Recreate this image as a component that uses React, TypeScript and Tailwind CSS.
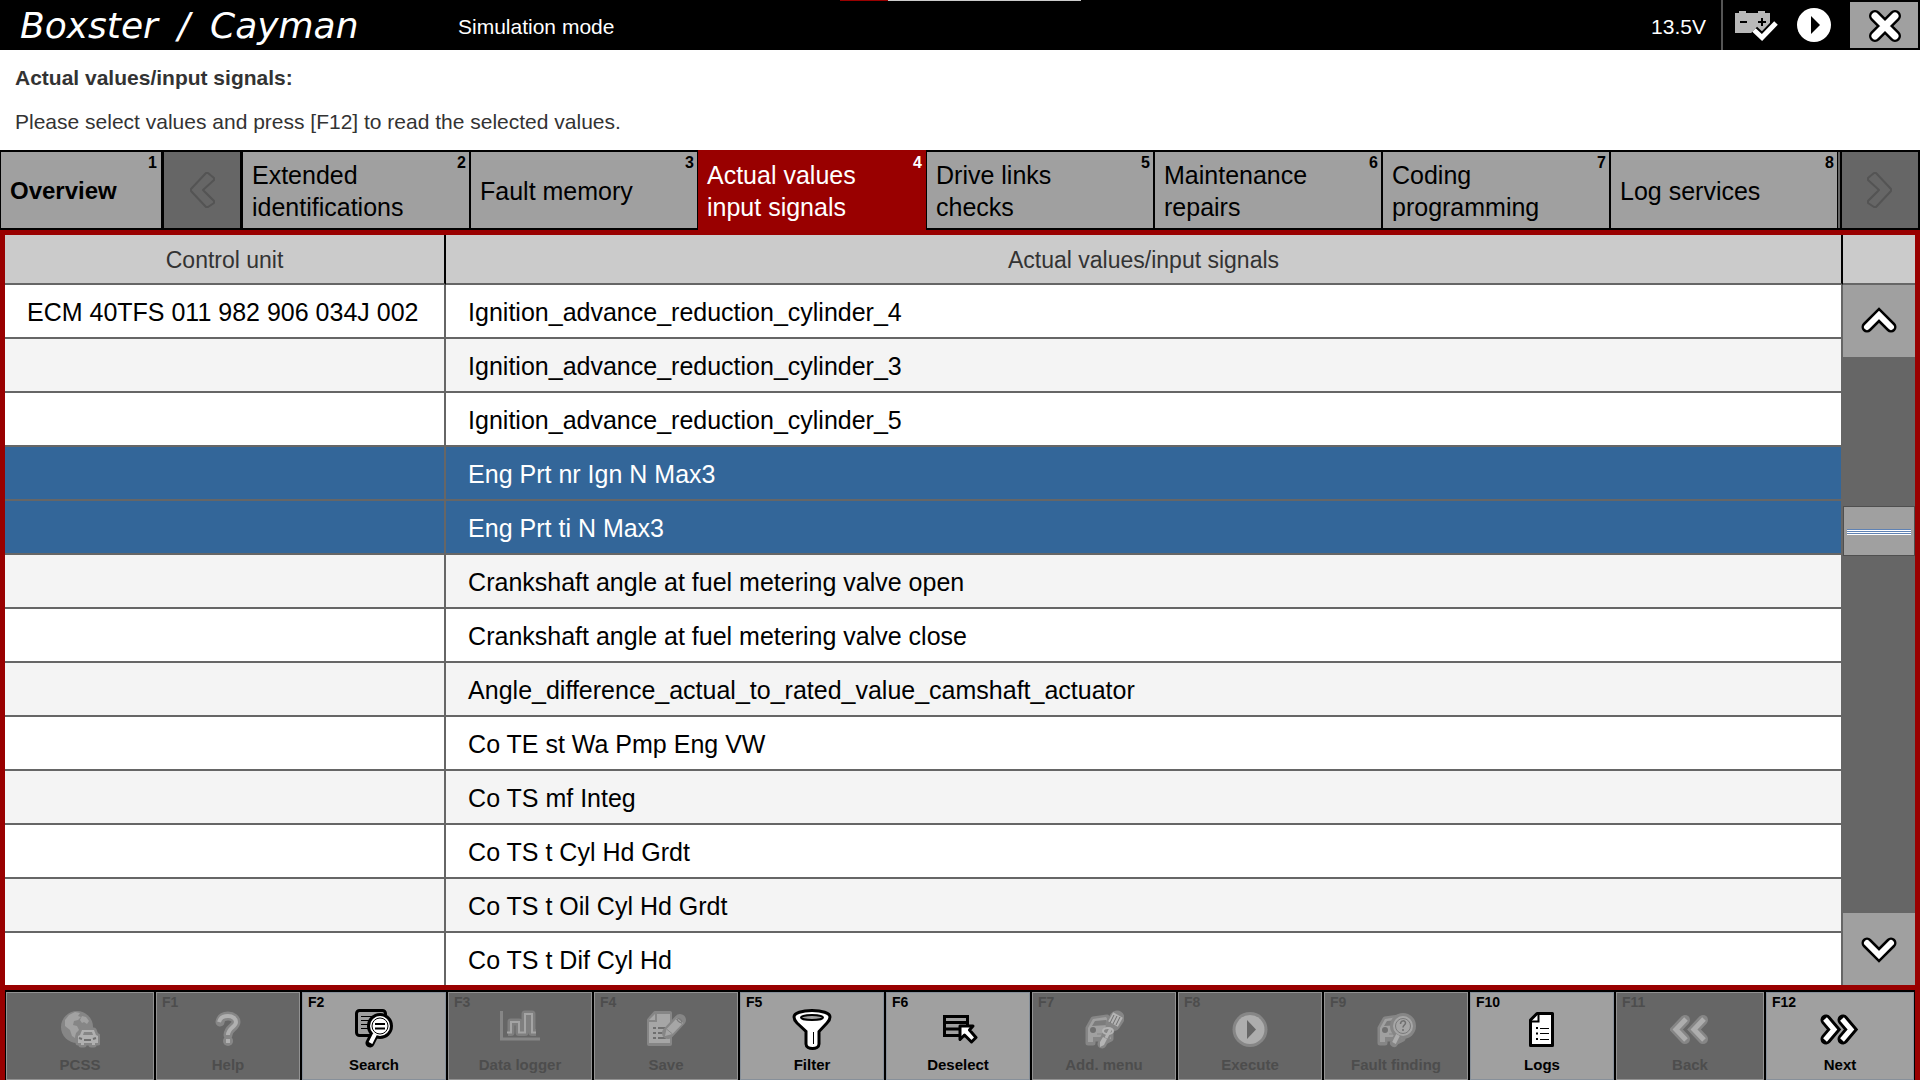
import { useState } from "react";

const tabs = [
  { id: 2, lines: ["Extended", "identifications"] },
  { id: 3, lines: ["Fault memory"] },
  { id: 4, lines: ["Actual values", "input signals"] },
  { id: 5, lines: ["Drive links", "checks"] },
  { id: 6, lines: ["Maintenance", "repairs"] },
  { id: 7, lines: ["Coding", "programming"] },
  { id: 8, lines: ["Log services"] },
];

const rows = [
  { unit: "ECM 40TFS 011 982 906 034J 002", value: "Ignition_advance_reduction_cylinder_4" },
  { unit: "", value: "Ignition_advance_reduction_cylinder_3" },
  { unit: "", value: "Ignition_advance_reduction_cylinder_5" },
  { unit: "", value: "Eng Prt nr Ign N Max3" },
  { unit: "", value: "Eng Prt ti N Max3" },
  { unit: "", value: "Crankshaft angle at fuel metering valve open" },
  { unit: "", value: "Crankshaft angle at fuel metering valve close" },
  { unit: "", value: "Angle_difference_actual_to_rated_value_camshaft_actuator" },
  { unit: "", value: "Co TE st Wa Pmp Eng VW" },
  { unit: "", value: "Co TS mf Integ" },
  { unit: "", value: "Co TS t Cyl Hd Grdt" },
  { unit: "", value: "Co TS t Oil Cyl Hd Grdt" },
  { unit: "", value: "Co TS t Dif Cyl Hd" },
];

const actions = [
  { fkey: "", label: "PCSS", icon: <GlobeCarIcon /> },
  { fkey: "F1", label: "Help", icon: <HelpIcon /> },
  { fkey: "F2", label: "Search", icon: <SearchIcon />, enabled: true },
  { fkey: "F3", label: "Data logger", icon: <LoggerIcon /> },
  { fkey: "F4", label: "Save", icon: <SaveIcon /> },
  { fkey: "F5", label: "Filter", icon: <FilterIcon />, enabled: true },
  { fkey: "F6", label: "Deselect", icon: <DeselectIcon />, enabled: true },
  { fkey: "F7", label: "Add. menu", icon: <CarToolIcon /> },
  { fkey: "F8", label: "Execute", icon: <ExecuteIcon /> },
  { fkey: "F9", label: "Fault finding", icon: <CarSearchIcon /> },
  { fkey: "F10", label: "Logs", icon: <LogsIcon />, enabled: true },
  { fkey: "F11", label: "Back", icon: <BackIcon /> },
  { fkey: "F12", label: "Next", icon: <NextIcon />, enabled: true },
];

function GlobeCarIcon() {
  return (
    <svg width="40" height="40" viewBox="0 0 40 40" fill="none">
      <circle cx="17" cy="19" r="16" fill="#868686" />
      <path
        d="M5 12l4-5 6-3 5 1-2 3 3 1-3 3-4 1-1 4 4 1 2 4-3 3-1 5-3-2-2-6-5-4zM22 8l4 1 3 4-2 3-3-2-2 1-2-3z"
        fill="#a2a2a2"
      />
      <path
        d="M20 27l2-5h12l2 5 2 1v7h-4v2h-3v-2h-7v2h-3v-2h-3v-7z"
        fill="#868686"
        stroke="#868686"
        strokeWidth="5"
        strokeLinejoin="round"
      />
      <path d="M20 27l2-5h12l2 5 2 1v7h-3v2h-3v-2h-8v2h-3v-2h-3v-7z" fill="#b0b0b0" />
      <path d="M23 27l1-3h8l1 3z" fill="#868686" />
      <path d="M19 30l3 1M36 30l-3 1M24 32h7" stroke="#6f6f6f" strokeWidth="2" />
    </svg>
  );
}

function HelpIcon() {
  return (
    <svg width="40" height="40" viewBox="0 0 40 40" fill="none" strokeLinecap="round">
      <path d="M12 14c1-5 4-6 8-6 5 0 8 3 8 6 0 5-8 6-8 13" stroke="#868686" strokeWidth="9" />
      <path d="M20 33h.1" stroke="#868686" strokeWidth="10" />
      <path
        d="M11 14c1-4 4-6 9-6s8 3 8 6c0 5-8 6-8 13"
        stroke="#b0b0b0"
        strokeWidth="4"
        strokeLinecap="butt"
      />
      <path d="M18 31h4v4h-4z" fill="#b0b0b0" />
    </svg>
  );
}

function SearchIcon() {
  return (
    <svg width="40" height="40" viewBox="0 0 40 40" fill="none" stroke="#000">
      <rect x="2.500" y="2.500" width="29" height="25" rx="3" strokeWidth="3" />
      <path d="M7 8.500h18M7 12.500h9M7 16.500h7M7 20.500h8" />
      <path d="M20 27l-4 8" strokeWidth="9" strokeLinecap="round" />
      <circle cx="26" cy="18" r="13" fill="#000" stroke="none" />
      <circle cx="26" cy="18" r="10" fill="#fff" stroke="none" />
      <circle cx="26" cy="18" r="8" />
      <path d="M21 16h10M21 20.500h10" strokeWidth="2" />
      <path d="M21 26l-4.500 9" stroke="#fff" strokeWidth="4" />
    </svg>
  );
}

function LoggerIcon() {
  return (
    <svg width="40" height="40" viewBox="0 0 40 40" fill="none">
      <path d="M1.500 3v28H40" stroke="#868686" strokeWidth="3" />
      <path
        d="M8 24.500h3V14h8v10.500h6V6h7v18.500h4"
        stroke="#7f7f7f"
        strokeWidth="7"
        strokeLinejoin="round"
      />
      <path d="M7 24.500h4V14h8v10.500h6V6h7v18.500h4" stroke="#a4a4a4" strokeWidth="2" />
    </svg>
  );
}

function SaveIcon() {
  return (
    <svg width="40" height="40" viewBox="0 0 40 40" fill="none">
      <path
        d="M9 5h15v31H3V12z"
        fill="#868686"
        stroke="#868686"
        strokeWidth="4"
        strokeLinejoin="round"
      />
      <path d="M11 6h13v29H3V14h8z" fill="#a6a6a6" />
      <path d="M9 6v6H3z" fill="#a6a6a6" />
      <path d="M7 20h3M7 25h3M7 30h3M12 20h8M12 25h6M12 30h8" stroke="#6f6f6f" strokeWidth="2" />
      <path d="M22 25L34 12" stroke="#868686" strokeWidth="12" strokeLinecap="round" />
      <path d="M19 28l1.500-7L31 10l6 5-10.500 11z" fill="#a6a6a6" />
      <path d="M20.500 21l6 5M30 11l6 5" stroke="#868686" />
      <ellipse cx="33.500" cy="12.500" rx="2.500" ry="1.500" transform="rotate(40 33.500 12.500)" stroke="#7a7a7a" />
    </svg>
  );
}

function FilterIcon() {
  return (
    <svg width="40" height="42" viewBox="0 0 40 42" fill="none">
      <path
        d="M2 9c0-4 8-6.500 18-6.500S38 5 38 9c0 2-1 4-3 6l-8 8.500V36c0 6-13 6-13 0V23.500L5 15c-2-2-3-4-3-6z"
        fill="#fff"
        stroke="#000"
        strokeWidth="3"
      />
      <ellipse cx="20" cy="9.500" rx="11" ry="2.500" fill="#a0a0a0" stroke="#000" strokeWidth="2" />
      <path d="M21.500 24v12" stroke="#000" />
    </svg>
  );
}

function DeselectIcon() {
  return (
    <svg width="40" height="40" viewBox="0 0 40 40" fill="none" stroke="#000">
      <path d="M6.500 8.500h23v19h-23zM6.500 14.500h23M6.500 21h23" strokeWidth="3" />
      <path
        d="M22 18h13l-3.500 4 6.500 7.500-4.500 4.500-7-7-4.500 4.500z"
        fill="#fff"
        strokeWidth="3"
        strokeLinejoin="round"
      />
    </svg>
  );
}

function CarShape() {
  return (
    <>
      <path
        d="M4 20l5-9 14-2 4 8v14l-6 3-1-3H9v4H4z"
        fill="#868686"
        stroke="#868686"
        strokeWidth="5"
        strokeLinejoin="round"
      />
      <path d="M4 20l5-9 13-2 5 8v14h-4l-1-2H9v5H4z" fill="#a0a0a0" />
      <path d="M8 18l3-5 11-1 2 5z" fill="#7c7c7c" />
      <circle cx="9" cy="22" r="3" fill="#707070" />
      <path d="M13 26h10" stroke="#868686" />
    </>
  );
}

function CarToolIcon() {
  return (
    <svg width="40" height="42" viewBox="0 0 40 42" fill="none">
      <CarShape />
      <path d="M33 10l-4 6" stroke="#868686" strokeWidth="15" strokeLinecap="round" />
      <path d="M26 20l-8 16" stroke="#868686" strokeWidth="9" strokeLinecap="round" />
      <path d="M34 7l-5 9" stroke="#b4b4b4" strokeWidth="11" strokeLinejoin="round" />
      <path d="M30 7l-4 8M33 8l-4 8M36 9l-4 8" stroke="#6f6f6f" />
      <path d="M27 20l-5 10" stroke="#b4b4b4" strokeWidth="3" />
      <ellipse cx="24" cy="23" rx="5" ry="3" stroke="#b4b4b4" strokeWidth="2" />
      <path d="M19 29l4 2-3 6-4 2v-5z" fill="#b4b4b4" />
    </svg>
  );
}

function ExecuteIcon() {
  return (
    <svg width="40" height="40" viewBox="0 0 40 40" fill="none">
      <circle cx="20" cy="21.500" r="17.500" fill="#868686" />
      <circle cx="20" cy="21.500" r="14.500" fill="#adadad" />
      <path d="M17 12l9 9.500-9 9.500z" fill="#666" />
    </svg>
  );
}

function CarSearchIcon() {
  return (
    <svg width="40" height="40" viewBox="0 0 40 40" fill="none">
      <CarShape />
      <path d="M23 26l-5 9" stroke="#868686" strokeWidth="8" strokeLinecap="round" />
      <circle cx="27" cy="18" r="13" fill="#868686" />
      <circle cx="27" cy="18" r="10" fill="#a6a6a6" />
      <circle cx="27" cy="18" r="7.500" stroke="#7a7a7a" />
      <path d="M24.500 16c0-4 5-4 5-1 0 2-2.500 2-2.500 4.500M27 21v2" stroke="#6f6f6f" strokeWidth="1.500" />
      <path d="M22 27l-4 8" stroke="#adadad" strokeWidth="4" />
    </svg>
  );
}

function LogsIcon() {
  return (
    <svg width="40" height="40" viewBox="0 0 40 40" fill="none" stroke="#000">
      <path d="M15 5.500h15.500v32H8.500V12z" fill="#fff" strokeWidth="3" strokeLinejoin="round" />
      <path d="M16.500 5v8.500H8" strokeWidth="2" />
      <path d="M14 20h2M14 25.500h2M14 31h2" strokeWidth="2" />
      <path d="M18 20.500h9M18 25.500h9M18 31.500h9" />
    </svg>
  );
}

function BackIcon() {
  return (
    <svg width="40" height="40" viewBox="0 0 40 40" fill="none">
      <path d="M15 12L6 21.500 15 31M33 12l-9 9.500L33 31" stroke="#868686" strokeWidth="10" strokeLinecap="round" />
      <path d="M16 11L6 21.500 16 32M34 11L24 21.500 34 32" stroke="#adadad" strokeWidth="5" />
    </svg>
  );
}

function NextIcon() {
  return (
    <svg width="40" height="40" viewBox="0 0 40 40" fill="none">
      <path d="M6 12l8 9.500L6 31M23 12l8 9.500L23 31" stroke="#000" strokeWidth="11" strokeLinecap="round" />
      <path d="M5 11l9 10.500L5 32M22 11l9 10.500L22 32" stroke="#fff" strokeWidth="5" />
    </svg>
  );
}

function BatteryIcon() {
  return (
    <svg width="46" height="32" viewBox="0 0 46 32" fill="none">
      <path d="M1 4h4V2h7v2h12V2h7v2h5v20H1z" fill="#b8b8b8" />
      <path d="M6 13h7M24 13h8M28 9v8" stroke="#000" strokeWidth="2" />
      <path d="M20 21l8 7.500L41 15" stroke="#000" strokeWidth="9" />
      <path d="M20 21l8 7.500L42 14" stroke="#fff" strokeWidth="5" />
    </svg>
  );
}

function ScrollChevron({ down }: { down?: boolean }) {
  const d = down ? "M7 8l12 12L31 8" : "M7 20L19 8l12 12";
  return (
    <svg width="38" height="28" viewBox="0 0 38 28" fill="none" strokeLinecap="round">
      <path d={d} stroke="#000" strokeWidth="11" />
      <path d={d} stroke="#fff" strokeWidth="6" />
    </svg>
  );
}

function TabChevron({ left }: { left?: boolean }) {
  return (
    <svg width="28" height="40" viewBox="0 0 28 40" fill="none" stroke="#545454" strokeWidth="2" strokeLinejoin="round">
      {left ? (
        <path d="M20 3l6 5v2L15 20l11 11v2l-6 4h-2L3 21v-2L18 3z" />
      ) : (
        <path d="M8 3L2 8v2l11 10L2 31v2l6 4h2l15-16v-2L10 3z" />
      )}
    </svg>
  );
}

export default function App() {
  const [activeTab, setActiveTab] = useState(4);
  const [selected, setSelected] = useState([3, 4]);

  const toggleRow = (index: number) => {
    setSelected((prev) =>
      prev.includes(index) ? prev.filter((i) => i !== index) : [...prev, index]
    );
  };

  return (
    <div className="flex min-h-screen flex-col bg-white font-['Liberation_Sans',Arial,sans-serif]">
      <header className="relative flex h-[50px] items-center bg-black text-[21px] text-white">
        <div className="absolute left-[840px] top-0 flex h-px w-[241px]">
          <span className="w-12 bg-[#990000]" />
          <span className="flex-1 bg-[#cccccc]" />
        </div>
        <div className="flex w-[458px] items-center gap-5 whitespace-nowrap pl-5 pt-[2px] font-['DejaVu_Sans',sans-serif] text-[36px] italic leading-10">
          <span>Boxster</span>
          <span>/</span>
          <span>Cayman</span>
        </div>
        <span className="pt-1">Simulation mode</span>
        <span className="ml-auto pr-[15px] pt-1">13.5V</span>
        <div className="flex h-full items-center border-l-2 border-[#555555] pl-[11px]">
          <BatteryIcon />
          <button className="ml-4" aria-label="Run">
            <svg width="36" height="36" viewBox="0 0 36 36">
              <circle cx="18" cy="18" r="17" fill="#fff" />
              <path d="M15 9l9 9-9 9z" fill="#000" />
            </svg>
          </button>
          <button
            className="ml-[18px] mr-[2px] flex h-[46px] w-[68px] items-center justify-center bg-[#a0a0a0]"
            aria-label="Close"
          >
            <svg width="34" height="34" viewBox="0 0 34 34" fill="none">
              <path d="M8 8l20 20M28 8L8 28" stroke="#000" strokeWidth="12" strokeLinecap="round" />
              <path d="M8 8l20 20M28 8L8 28" stroke="#fff" strokeWidth="7" strokeLinecap="round" />
            </svg>
          </button>
        </div>
      </header>

      <section className="h-[100px] px-[15px] pt-4 text-[21px] leading-6 text-[#333333]">
        <h1 className="font-bold">Actual values/input signals:</h1>
        <p className="mt-5">Please select values and press [F12] to read the selected values.</p>
      </section>

      <nav className="flex h-20 bg-black py-[2px] pl-px pr-[2px] text-[25px] leading-8">
        <button className="relative w-40 bg-[#a0a0a0] pl-[9px] pt-[2px] text-left text-2xl font-bold leading-8">
          Overview
          <span className="absolute right-1 top-[3px] text-base leading-4">1</span>
        </button>
        <button
          className="mx-[3px] flex w-[76px] items-center justify-center bg-[#666666]"
          aria-label="Previous tabs"
          disabled
        >
          <TabChevron left />
        </button>
        <div className="grid flex-1 grid-cols-7 gap-[2px]">
          {tabs.map((tab) => (
            <button
              key={tab.id}
              onClick={() => setActiveTab(tab.id)}
              className={
                tab.id === activeTab
                  ? "relative -mx-px -my-[2px] bg-[#990000] px-[9px] pt-[2px] text-left text-white"
                  : "relative bg-[#a0a0a0] px-[9px] pt-[2px] text-left"
              }
            >
              {tab.lines.map((line) => (
                <span key={line} className="block">
                  {line}
                </span>
              ))}
              <span
                className={
                  tab.id === activeTab
                    ? "absolute right-1 top-[5px] text-base font-bold leading-4"
                    : "absolute right-[3px] top-[3px] text-base font-bold leading-4"
                }
              >
                {tab.id}
              </span>
            </button>
          ))}
        </div>
        <div className="ml-px mr-[2px] w-[2px] bg-[#666666]" />
        <button
          className="flex w-[76px] items-center justify-center bg-[#666666]"
          aria-label="Next tabs"
          disabled
        >
          <TabChevron />
        </button>
      </nav>

      <main className="flex flex-1 border-[5px] border-[#990000]">
        <table className="flex-1 table-fixed border-separate border-spacing-0 text-[25px]">
          <thead>
            <tr className="h-[50px] bg-[#cbcbcb] text-[23px] text-[#333333]">
              <th className="w-[24%] border-b-2 border-r-2 border-b-[#666666] border-r-black p-0 pt-[2px] font-normal">
                Control unit
              </th>
              <th className="border-b-2 border-r-2 border-b-[#666666] border-r-black p-0 pt-[2px] font-normal">
                Actual values/input signals
              </th>
            </tr>
          </thead>
          <tbody className="[&>tr:last-child]:h-[52px] [&>tr:last-child>td]:border-b-0">
            {rows.map((row, index) => (
              <tr
                key={index}
                onClick={() => toggleRow(index)}
                className={
                  selected.includes(index)
                    ? "h-[54px] bg-[#336699] text-white"
                    : index % 2
                      ? "h-[54px] bg-[#f4f4f4] text-black"
                      : "h-[54px] bg-white text-black"
                }
              >
                <td className="whitespace-nowrap border-b-2 border-r-2 border-[#666666] py-0 pl-[22px] pt-1">{row.unit}</td>
                <td className="border-b-2 border-r-2 border-[#666666] py-0 pl-[22px] pt-1">{row.value}</td>
              </tr>
            ))}
          </tbody>
        </table>
        <div className="flex w-[72px] flex-col bg-[#666666]">
          <div className="h-[50px] border-b-2 border-[#666666] bg-[#cbcbcb]" />
          <button className="flex h-[72px] items-center justify-center bg-[#a0a0a0]" aria-label="Scroll up">
            <ScrollChevron />
          </button>
          <div className="flex-1 pt-[149px]">
            <div className="flex h-[50px] items-center border border-[#4f4f4f] bg-[#a0a0a0] px-[3px] pt-[2px]">
              <div className="flex w-full flex-col">
                <span className="h-px bg-[#5f82b4]" />
                <span className="h-px bg-white" />
                <span className="h-px bg-[#5f82b4]" />
                <span className="h-px bg-white" />
                <span className="h-px bg-[#5f82b4]" />
                <span className="h-px bg-white" />
              </div>
            </div>
          </div>
          <button className="flex h-[72px] items-center justify-center bg-[#a0a0a0]" aria-label="Scroll down">
            <ScrollChevron down />
          </button>
        </div>
      </main>

      <footer className="border-x-[5px] border-[#990000] bg-black">
        <div className="grid grid-cols-[148fr_repeat(10,144fr)_148fr_148fr] gap-[2px] px-px pt-[2px]">
          {actions.map((action) => (
            <button
              key={action.label}
              disabled={!action.enabled}
              className={
                action.enabled
                  ? "relative flex h-[88px] flex-col items-center border border-[#87909a] bg-[#a0a0a0] pt-[15px] text-black"
                  : "relative flex h-[88px] flex-col items-center border border-[#929292] bg-[#666666] pt-[15px] text-[#4d4d4d]"
              }
            >
              <span className="absolute left-[5px] top-px text-sm font-bold leading-4">{action.fkey}</span>
              <span className="h-10">{action.icon}</span>
              <span className="mt-[9px] text-[15px] font-bold leading-4">{action.label}</span>
            </button>
          ))}
        </div>
      </footer>
    </div>
  );
}
